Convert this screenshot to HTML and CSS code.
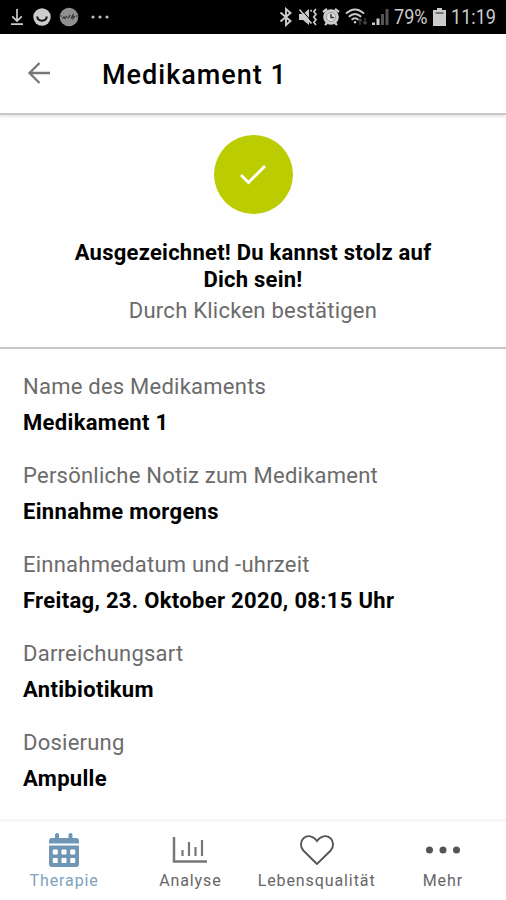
FILE: index.html
```html
<!DOCTYPE html>
<html lang="de">

<head>
	<meta charset="UTF-8">
	<meta name="viewport" content="width=device-width, initial-scale=1.0">
	<title>Medikament 1</title>
	<link rel="stylesheet" href="styles.css">
</head>

<body>
	<!-- Statusleiste -->
	<div class="statusbar">
		<div class="status-left">
			<svg width="14" height="18" viewBox="0 0 14 18" fill="none" stroke="#ccc" stroke-width="1.7"><path d="M7 1v12M2.200 8.300L7 13l4.800-4.700M1 16.200h12"/></svg>
			<svg width="18" height="18" viewBox="0 0 18 18"><circle cx="9" cy="9" r="8.700" fill="#ccc"/><path d="M4.200 8.500c.6 5.500 9 5.500 9.600 0" fill="none" stroke="#111" stroke-width="2"/></svg>
			<svg width="20" height="20" viewBox="0 0 20 20"><circle cx="10" cy="10" r="9.300" fill="#8f8f8f"/><path d="M0 9h3M17 9h3M3.500 11.500l1.500-1.500 1 1.500 2-2.500M9 11.500l2-3.500M12 11.500l2-3.500v3.500l2-2.500" fill="none" stroke="#333" stroke-width="1.200"/></svg>
			<svg class="status-dots" width="18" height="4" viewBox="0 0 18 4" fill="#bbb"><circle cx="2" cy="2" r="1.600"/><circle cx="9" cy="2" r="1.600"/><circle cx="16" cy="2" r="1.600"/></svg>
		</div>
		<div class="status-right">
			<svg width="14" height="20" viewBox="0 0 14 20" fill="none" stroke="#ccc" stroke-width="1.900"><path d="M1.500 5.500l10 8.500L7 18V2l4.500 4-10 8.500"/></svg>
			<svg class="mute" width="20" height="20" viewBox="0 0 20 20"><path d="M1 7h4l6-5v16l-6-5H1z" fill="#ccc"/><path d="M1.500 2.500l12 14" stroke="#ccc" stroke-width="1.800"/><path d="M2.500 1.500l12 14" stroke="#000" stroke-width="1"/><path d="M12.500 4.500l1-1.500M18 2l-2.200 2.700L18 7.300 15.800 10l2.200 2.700-2.200 2.600L18 18" fill="none" stroke="#ccc" stroke-width="1.700"/></svg>
			<svg class="alarm" width="18" height="18" viewBox="0 0 18 18"><path d="M1 4l4-3M17 4l-4-3M3 17l2-2M15 17l-2-2" stroke="#ccc" stroke-width="2.200"/><circle cx="9" cy="9" r="7.800" fill="#ccc"/><circle cx="9" cy="9" r="4.600" fill="#ddd" stroke="#999" stroke-width="1"/><path d="M9 6v3.500h3" fill="none" stroke="#333" stroke-width="1.500"/></svg>
			<svg class="wifi" width="23" height="20" viewBox="0 0 23 20" fill="none" stroke="#ccc" stroke-width="1.900"><path d="M1 6.500q9-8.200 18 0M3.800 9.700q6.200-5.600 12.400 0M6.600 12.700q3.400-3 6.800 0"/><circle cx="10" cy="15.300" r="1.200" fill="#ccc" stroke="none"/><path d="M15 18v-6M13.200 14l1.800-2 1.800 2M20 11v6M18.200 15l1.800 2 1.800-2" stroke="#444" stroke-width="1.300"/></svg>
			<svg class="signal" width="18" height="18" viewBox="0 0 18 18"><path d="M1 14.500h3V17H1zM5.500 10.500h3V17h-3z" fill="#ccc"/><path d="M10 6h3v11h-3zM14.500 1h3v16h-3z" fill="#555"/></svg>
			<span class="status-text percent">79%</span>
			<svg class="battery" width="13" height="18" viewBox="0 0 13 18"><path d="M4 0h5v2h4v16H0V2h4z" fill="#ccc"/><path d="M2.500 5h8" stroke="#555" stroke-width="1.500"/></svg>
			<span class="status-text clock">11:19</span>
		</div>
	</div>

	<header class="header">
		<svg class="back" width="24" height="24" viewBox="0 0 24 24" fill="none" stroke="#777" stroke-width="2.300"><path d="M23 12H2.500M12.500 2L2.500 12l10 10"/></svg>
		<h1 class="title">Medikament 1</h1>
	</header>

	<section class="confirm">
		<button class="check" aria-label="Bestätigen">
			<svg width="28" height="22" viewBox="0 0 28 22" fill="none" stroke="#fff" stroke-width="2.900"><path d="M2 11l7.500 7.500L26 2"/></svg>
		</button>
		<h2 class="praise">Ausgezeichnet! Du kannst stolz auf Dich sein!</h2>
		<p class="hint">Durch Klicken bestätigen</p>
	</section>

	<dl class="details">
		<dt>Name des Medikaments</dt>
		<dd>Medikament 1</dd>
		<dt>Persönliche Notiz zum Medikament</dt>
		<dd>Einnahme morgens</dd>
		<dt>Einnahmedatum und -uhrzeit</dt>
		<dd>Freitag, 23. Oktober 2020, 08:15 Uhr</dd>
		<dt>Darreichungsart</dt>
		<dd>Antibiotikum</dd>
		<dt>Dosierung</dt>
		<dd>Ampulle</dd>
	</dl>

	<!-- Navigation unten -->
	<nav class="tabs">
		<a class="tab active">
			<svg width="36" height="36" viewBox="0 0 36 36" fill="#6f96b5"><path d="M3 11.500V9q0-3 3-3h3V3q0-2 2-2t2 2v3h9.500V3q0-2 2-2t2 2v3H30q3 0 3 3v2.500z"/><path fill-rule="evenodd" d="M3 13.500h30V32q0 3-3 3H6q-3 0-3-3zM7.500 17.500q-.7 0-.7.7v3.600q0 .7.7.7h3.600q.7 0 .7-.7v-3.600q0-.7-.7-.7zM16.200 17.500q-.7 0-.7.7v3.600q0 .7.7.7h3.600q.7 0 .7-.7v-3.600q0-.7-.7-.7zM24.900 17.500q-.7 0-.7.7v3.600q0 .7.7.7h3.600q.7 0 .7-.7v-3.600q0-.7-.7-.7zM7.500 26q-.7 0-.7.7v3.600q0 .7.7.7h3.600q.7 0 .7-.7v-3.600q0-.7-.7-.7zM16.200 26q-.7 0-.7.7v3.600q0 .7.7.7h3.600q.7 0 .7-.7v-3.600q0-.7-.7-.7zM24.900 26q-.7 0-.7.7v3.600q0 .7.7.7h3.600q.7 0 .7-.7v-3.600q0-.7-.7-.7z"/></svg>
			<span>Therapie</span>
		</a>
		<a class="tab">
			<svg width="36" height="36" viewBox="0 0 36 36" fill="none" stroke="#777"><path d="M2 5v24.500h33" stroke-width="2.500"/><path d="M10.500 18v6M17 10v14M23.500 15v9M30 8v16" stroke-width="2.200"/></svg>
			<span>Analyse</span>
		</a>
		<a class="tab">
			<svg width="36" height="36" viewBox="0 0 36 36" fill="none" stroke="#555" stroke-width="1.900"><path d="M18 32L4.300 18.500C1 15 1.300 9 4.500 6.200c4-3.500 10-2.400 13.500 2.800 3.500-5.200 9.500-6.300 13.500-2.800 3.200 2.800 3.500 8.800.2 12.300z"/></svg>
			<span>Lebensqualität</span>
		</a>
		<a class="tab">
			<svg width="36" height="36" viewBox="0 0 36 36" fill="#555"><circle cx="4.500" cy="18" r="3.500"/><circle cx="18" cy="18" r="3.500"/><circle cx="31.500" cy="18" r="3.500"/></svg>
			<span>Mehr</span>
		</a>
	</nav>
</body>

</html>
```

FILE: styles.css
```css
* {
	box-sizing: border-box;
}

body {
	margin: 0;
	height: 900px;
	display: flex;
	flex-direction: column;
	overflow: hidden;
	background: #fefefe;
	font-family: Roboto, "Liberation Sans", sans-serif;
	color: #000;
}

svg {
	display: block;
	flex: none;
}

.statusbar {
	flex: none;
	display: flex;
	justify-content: space-between;
	height: 34px;
	padding: 0 9px 0 10px;
	background: #000;
	color: #ccc;
}

.status-left,
.status-right {
	display: flex;
	align-items: center;
}

.status-left {
	gap: 8px;
}

.status-left svg:nth-child(2) {
	margin-left: 1px;
}

.status-dots {
	margin-left: 4px;
}

.mute {
	margin-left: 5px;
}

.alarm {
	margin-left: 4px;
}

.wifi {
	margin-left: 5px;
}

.signal {
	margin-left: 3px;
}

.battery {
	margin-left: 5px;
}

.status-text {
	font-size: 21px;
	white-space: nowrap;
	transform: scaleX(.86);
	transform-origin: left;
}

.percent {
	width: 34px;
	margin-left: 5px;
}

.clock {
	width: 46px;
	margin-left: 5px;
}

.header {
	flex: none;
	display: flex;
	align-items: center;
	height: 81px;
	padding: 0 27px 1px;
	border-bottom: 2px solid #c8cac9;
	box-shadow: 0 1px 3px rgba(0, 0, 0, .15);
	background: #fff;
}

.title {
	margin: 3px 0 0 51px;
	font-size: 27px;
	font-weight: 500;
	letter-spacing: 1px;
}

.confirm {
	flex: none;
	display: flex;
	flex-direction: column;
	align-items: center;
	height: 234px;
	padding-top: 20px;
	border-bottom: 2px solid #c6c6c6;
	text-align: center;
}

.check {
	display: flex;
	align-items: center;
	justify-content: center;
	width: 79px;
	height: 79px;
	padding: 0;
	border: none;
	border-radius: 50%;
	background: #bbcc00;
}

.praise {
	width: 380px;
	margin: 25px 0 0;
	font-size: 22px;
	font-weight: 700;
	line-height: 27px;
	letter-spacing: .25px;
}

.hint {
	margin: 4px 0 0;
	font-size: 22px;
	line-height: 28px;
	letter-spacing: .25px;
	color: #6b6b6b;
}

.details {
	flex: 1;
	margin: 0;
	padding: 23px 23px 0;
	font-size: 22px;
}

.details dt {
	line-height: 30px;
	letter-spacing: .24px;
	color: #6b6b6b;
}

.details dd {
	margin: 4px 0 21.1px;
	line-height: 34px;
	font-weight: 700;
	letter-spacing: .32px;
}

.tabs {
	flex: none;
	display: flex;
	height: 81px;
	padding: 10px 0 0 1px;
	border-top: 3px solid #f7f7f7;
	background: #fff;
}

.tab {
	flex: 1;
	display: flex;
	flex-direction: column;
	align-items: center;
	font-size: 16px;
	letter-spacing: .9px;
	color: #666;
}

.tab span {
	margin-top: 3px;
	line-height: 20px;
}

.tabs .active {
	color: #7fa2bd;
}
```
